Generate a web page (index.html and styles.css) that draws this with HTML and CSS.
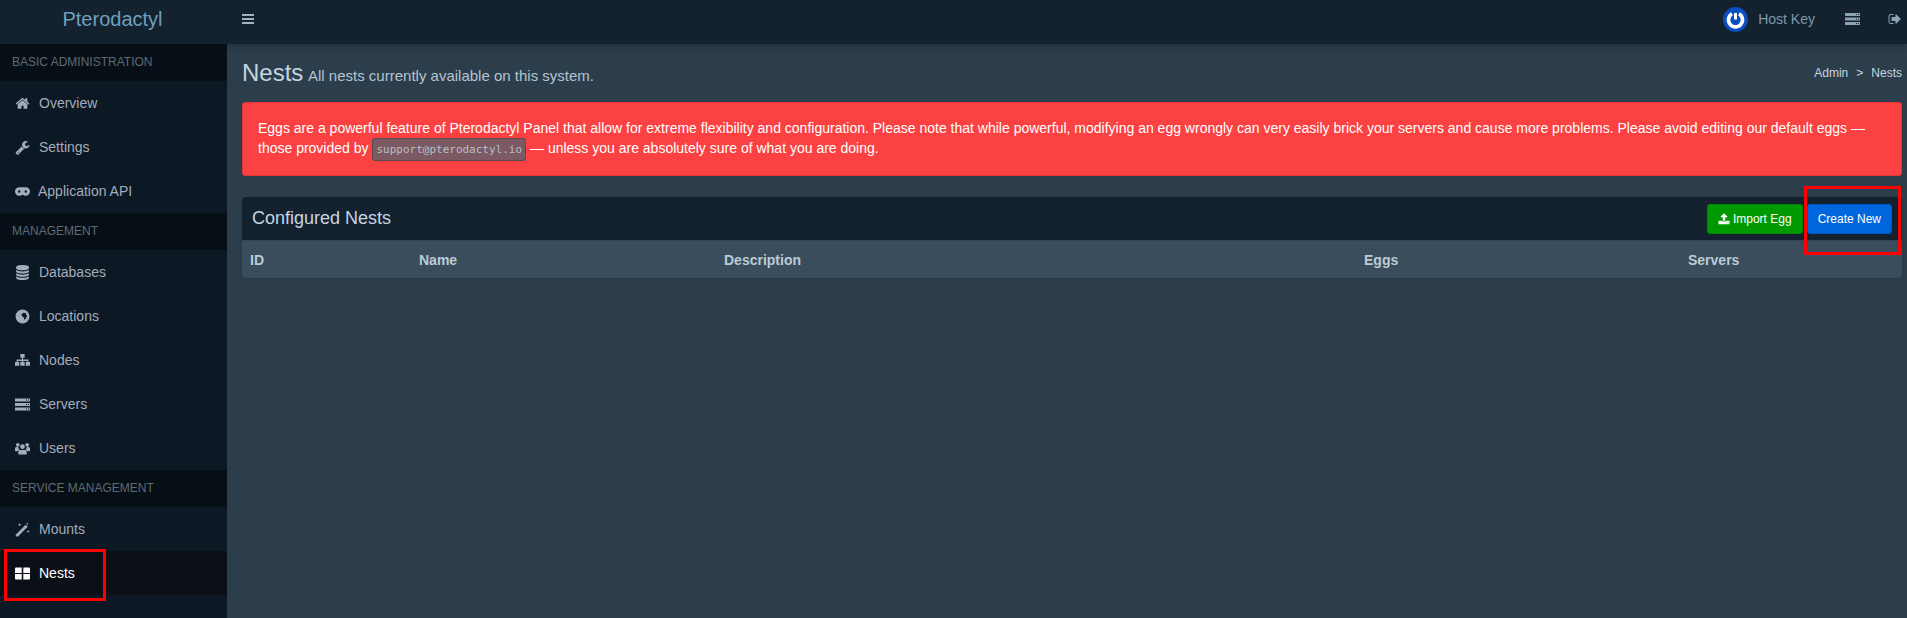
FILE: index.html
```html
<!DOCTYPE html>
<html lang="en">
<head>
    <meta charset="UTF-8">
    <meta name="viewport" content="width=device-width, initial-scale=1.0">
    <title>Nests</title>
    <link rel="stylesheet" href="styles.css">
</head>
<body>
    <header class="topbar">
        <a class="logo">Pterodactyl</a>
        <svg class="menu-toggle" viewBox="0 0 14 12"><path d="M1 1h12v2H1zM1 5h12v2H1zM1 9h12v2H1z"/></svg>
        <div class="topbar-right">
            <svg class="user-logo" viewBox="0 0 25 25">
                <circle cx="12.500" cy="12.500" r="12.500" fill="#0a4fc0"/>
                <path d="M9 6.800a7 7 0 1 0 7 0" fill="none" stroke="#fff" stroke-width="3.600"/>
                <path d="M12.500 6v6.500" stroke="#fff" stroke-width="3"/>
            </svg>
            <span class="user-name">Host Key</span>
            <svg class="top-icon server-icon" viewBox="0 0 15 12"><path fill-rule="evenodd" d="M0 0h15v3H0zM0 4.500h15v3H0zM0 9h15v3H0zM11 1v1h1V1zM13 1v1h1V1zM11 5.500v1h1v-1zM13 5.500v1h1v-1zM11 10v1h1v-1zM13 10v1h1v-1z"/></svg>
            <svg class="top-icon signout-icon" viewBox="0 0 1664 1792"><path d="M704 1440q0 4 1 20t.5 26.500-3 23.500-10 19.500-20.500 6.500h-320q-119 0-203.500-84.500t-84.500-203.500v-704q0-119 84.500-203.500t203.500-84.500h320q13 0 22.500 9.500t9.500 22.500q0 4 1 20t.5 26.500-3 23.500-10 19.500-20.500 6.500h-320q-66 0-113 47t-47 113v704q0 66 47 113t113 47h312l11.500 1 11.500 3 8 5.500 7 9 2 13.500zm928-544q0 26-19 45l-544 544q-19 19-45 19t-45-19-19-45v-288h-448q-26 0-45-19t-19-45v-384q0-26 19-45t45-19h448v-288q0-26 19-45t45-19 45 19l544 544q19 19 19 45z"/></svg>
        </div>
    </header>

    <div class="wrapper">
        <aside class="sidebar">
            <div class="side-header">BASIC ADMINISTRATION</div>
            <a class="side-item">
                <svg class="side-icon" viewBox="0 0 1792 1792"><path d="M1472 992v480q0 26-19 45t-45 19h-384v-384h-256v384h-384q-26 0-45-19t-19-45v-480q0-1 .5-3t.5-3l575-474 575 474q1 2 1 6zm223-69l-62 74q-8 9-21 11h-3q-13 0-21-7l-692-577-692 577q-12 8-24 7-13-2-21-11l-62-74q-8-10-7-23.500t11-21.500l719-599q32-26 76-26t76 26l244 204v-195q0-14 9-23t23-9h192q14 0 23 9t9 23v408l219 182q10 8 11 21.500t-7 23.500z"/></svg>
                Overview
            </a>
            <a class="side-item">
                <svg class="side-icon" viewBox="0 0 1792 1792"><path d="M448 1472q0-26-19-45t-45-19-45 19-19 45 19 45 45 19 45-19 19-45zm644-420l-682 682q-37 37-90 37-52 0-91-37l-106-108q-38-36-38-90 0-53 38-91l681-681q39 98 114.500 173.500t173.500 114.500zm634-435q0 39-23 106-47 134-164.500 217.500t-258.500 83.500q-185 0-316.500-131.500t-131.500-316.500 131.500-316.500 316.500-131.500q58 0 121.500 16.500t107.500 46.500q16 11 16 28t-16 28l-293 169v224l193 107q5-3 79-48.500t135.500-81 70.500-35.500q15 0 23.500 10t8.500 25z"/></svg>
                Settings
            </a>
            <a class="side-item tight">
                <svg class="side-icon" viewBox="0 1 16 14"><path fill-rule="evenodd" d="M4.500 3.500h7a4.500 4.500 0 0 1 0 9c-1.500 0-2.200-.8-3.500-.8s-2 .8-3.500.8a4.500 4.500 0 0 1 0-9zM4.500 6.700a1.300 1.300 0 1 0 0 2.600 1.300 1.300 0 0 0 0-2.600zM11.500 6.700a1.300 1.300 0 1 0 0 2.600 1.300 1.300 0 0 0 0-2.600z"/></svg>
                Application API
            </a>

            <div class="side-header">MANAGEMENT</div>
            <a class="side-item">
                <svg class="side-icon" viewBox="0 0 1792 1792"><path d="M896 768q237 0 443-43t325-127v170q0 69-103 128t-280 93.500-385 34.500-385-34.500-280-93.500-103-128v-170q119 84 325 127t443 43zm0 768q237 0 443-43t325-127v170q0 69-103 128t-280 93.500-385 34.500-385-34.500-280-93.500-103-128v-170q119 84 325 127t443 43zm0-384q237 0 443-43t325-127v170q0 69-103 128t-280 93.500-385 34.500-385-34.500-280-93.500-103-128v-170q119 84 325 127t443 43zm0-1152q208 0 385 34.500t280 93.500 103 128v128q0 69-103 128t-280 93.500-385 34.500-385-34.500-280-93.500-103-128v-128q0-69 103-128t280-93.500 385-34.500z"/></svg>
                Databases
            </a>
            <a class="side-item">
                <svg class="side-icon" viewBox="1 1 14 14"><path fill-rule="evenodd" d="M8 1.500a6.500 6.500 0 1 1 0 13 6.500 6.500 0 0 1 0-13zM7 6l2-1.500 2.500.5-.5 1 1.200 1-.7 2.500-1.700 1.700-.6-2.200-1.600-1.200z"/></svg>
                Locations
            </a>
            <a class="side-item">
                <svg class="side-icon" viewBox="1 1 14 14"><path d="M6 2h4v3.500H8.500V7H13.500v2.500H15V13h-4V9.500h1.500V8.500h-4v1H10V13H6V9.500h1.500v-1h-4v1H5V13H1V9.500h1.500V7h5V5.500H6z"/></svg>
                Nodes
            </a>
            <a class="side-item">
                <svg class="side-icon" viewBox="0 0 15 12"><path fill-rule="evenodd" d="M0 0h15v3H0zM0 4.500h15v3H0zM0 9h15v3H0zM11 1v1h1V1zM13 1v1h1V1zM11 5.500v1h1v-1zM13 5.500v1h1v-1zM11 10v1h1v-1zM13 10v1h1v-1z"/></svg>
                Servers
            </a>
            <a class="side-item">
                <svg class="side-icon" viewBox="0 0 16 14"><path d="M3 1a2 2 0 1 1 0 4 2 2 0 0 1 0-4zM13 1a2 2 0 1 1 0 4 2 2 0 0 1 0-4zM8 2.500a2.500 2.500 0 1 1 0 5 2.500 2.500 0 0 1 0-5zM0 6.500c0-1 2-1.500 3.500-1 0 1 .5 2 1.300 2.700C3.500 8.500 3 9.500 3 10H1c-.6 0-1-.4-1-1zM16 6.500c0-1-2-1.500-3.500-1 0 1-.5 2-1.300 2.700 1.300.3 1.800 1.300 1.800 1.800h2c.6 0 1-.4 1-1zM5 8.500h6c1 0 1.500 1 1.500 2.500v1.500c0 .6-.4 1-1 1h-7c-.6 0-1-.4-1-1V11c0-1.500.5-2.500 1.500-2.500z"/></svg>
                Users
            </a>

            <div class="side-header">SERVICE MANAGEMENT</div>
            <a class="side-item">
                <svg class="side-icon" viewBox="0 0 16 16"><path d="M1 13.300 10.800 3.500a1 1 0 0 1 1.400 0l.8.8a1 1 0 0 1 0 1.400L3.200 15.500a1 1 0 0 1-1.400 0l-.8-.8a1 1 0 0 1 0-1.400z"/><path d="M5 1l.5 1.500L7 3l-1.500.5L5 5l-.5-1.500L3 3l1.500-.5zM14 8l.5 1.500L16 10l-1.500.5L14 12l-.5-1.500L12 10l1.500-.5zM13 .5l.4 1.100 1.100.4-1.100.4-.4 1.100-.4-1.100L11.500 2l1.100-.4z"/></svg>
                Mounts
            </a>
            <a class="side-item active">
                <svg class="side-icon" viewBox="0 0 15 12"><path d="M0 1a1 1 0 0 1 1-1h5.700v5.400H0zM8.300 0H14a1 1 0 0 1 1 1v4.400H8.300zM0 6.600h6.700V12H1a1 1 0 0 1-1-1zM8.300 6.600H15V11a1 1 0 0 1-1 1H8.300z"/></svg>
                Nests
                <span class="mark mark-side"></span>
            </a>
        </aside>

        <main class="content">
            <div class="content-header">
                <h1>Nests <small>All nests currently available on this system.</small></h1>
                <ol class="breadcrumb">
                    <li>Admin</li>
                    <li class="crumb-sep">&gt;</li>
                    <li>Nests</li>
                </ol>
            </div>

            <div class="alert">
                Eggs are a powerful feature of Pterodactyl Panel that allow for extreme flexibility and configuration. Please note that while powerful, modifying an egg wrongly can very easily brick your servers and cause more problems. Please avoid editing our default eggs — those provided by <code>support@pterodactyl.io</code> — unless you are absolutely sure of what you are doing.
            </div>

            <div class="box">
                <div class="box-header">
                    <h3>Configured Nests</h3>
                    <div class="box-tools">
                        <a class="btn btn-green">
                            <svg class="btn-icon" viewBox="0 0 1792 1792"><path d="M1344 1472q0-26-19-45t-45-19-45 19-19 45 19 45 45 19 45-19 19-45zm256 0q0-26-19-45t-45-19-45 19-19 45 19 45 45 19 45-19 19-45zm128-224v320q0 40-28 68t-68 28h-1472q-40 0-68-28t-28-68v-320q0-40 28-68t68-28h427q21 56 70.500 92t110.500 36h256q61 0 110.500-36t70.500-92h427q40 0 68 28t28 68zm-325-648q-17 40-59 40h-256v448q0 26-19 45t-45 19h-256q-26 0-45-19t-19-45v-448h-256q-42 0-59-40-17-39 14-69l448-448q18-19 45-19t45 19l448 448q31 30 14 69z"/></svg>
                            Import Egg
                        </a>
                        <a class="btn btn-blue">Create New<span class="mark mark-btn"></span></a>
                    </div>
                </div>
                <table class="nest-table">
                    <thead>
                        <tr>
                            <th class="col-id">ID</th>
                            <th class="col-name">Name</th>
                            <th class="col-desc">Description</th>
                            <th class="col-eggs">Eggs</th>
                            <th>Servers</th>
                        </tr>
                    </thead>
                </table>
            </div>
        </main>
    </div>
</body>
</html>
```

FILE: styles.css
```css
* {
    box-sizing: border-box;
}
body {
    display: flex;
    flex-direction: column;
    height: 100vh;
    margin: 0;
    overflow: hidden;
    background-color: #2c3e4c;
    font-family: "Liberation Sans", Arial, sans-serif;
    font-size: 14px;
    color: #cad1d8;
}

/* top bar */
.topbar {
    display: flex;
    align-items: center;
    height: 44px;
    padding-bottom: 6px;
    flex-shrink: 0;
    background-color: #14222f;
    box-shadow: 0 2px 6px rgba(10, 20, 30, 0.35);
    position: relative;
}
.logo {
    width: 225px;
    text-align: center;
    font-size: 20px;
    color: #6f9fbd;
}
.menu-toggle {
    width: 14px;
    height: 12px;
    margin-left: 16px;
    fill: #9fb4c2;
}
.topbar-right {
    display: flex;
    align-items: center;
    margin-left: auto;
}
.user-logo {
    width: 25px;
    height: 25px;
}
.user-name {
    margin-left: 10px;
    color: #7d97a9;
}
.top-icon {
    fill: #8ba3b4;
}
.server-icon {
    width: 15px;
    height: 12px;
    margin-left: 30px;
}
.signout-icon {
    width: 13px;
    height: 14px;
    margin-left: 28px;
    margin-right: 6px;
}

.wrapper {
    display: flex;
    flex: 1;
    min-height: 0;
}

/* sidebar */
.sidebar {
    width: 227px;
    flex-shrink: 0;
    background-color: #0c1823;
}
.side-header {
    height: 37px;
    line-height: 37px;
    padding-left: 12px;
    font-size: 12px;
    color: #5f6a72;
    background-color: #070f16;
}
.side-item {
    display: flex;
    align-items: center;
    position: relative;
    height: 44px;
    padding-left: 15px;
    color: #a3acbd;
}
.side-icon {
    width: 15px;
    height: 15px;
    margin-right: 9px;
    fill: #a3acbd;
    flex-shrink: 0;
}
.side-item.tight .side-icon {
    margin-right: 8px;
}
.side-item.active {
    background-color: #0d0f17;
    color: #fff;
}
.side-item.active .side-icon {
    fill: #fff;
}

/* red annotation rectangles */
.mark {
    position: absolute;
    border: 3px solid #f00;
    pointer-events: none;
}
.mark-side {
    left: 4px;
    top: -2px;
    width: 102px;
    height: 52px;
}
.mark-btn {
    left: -4px;
    top: -19px;
    width: 97px;
    height: 69px;
}

/* content */
.content {
    flex: 1;
    min-width: 0;
    padding: 15px 5px 0 15px;
}
.content-header {
    display: flex;
    align-items: center;
    justify-content: space-between;
    height: 28px;
    margin-bottom: 15px;
}
.content-header h1 {
    margin: 0;
    font-size: 24px;
    font-weight: 400;
    color: #c6d5e0;
}
.content-header small {
    margin-left: -2px;
    font-size: 15px;
    color: #b5c4cf;
}
.breadcrumb {
    display: flex;
    gap: 8px;
    margin: 0;
    padding: 0;
    list-style: none;
    font-size: 12px;
    color: #c6d5e0;
}
.alert {
    min-height: 73px;
    padding: 15px;
    border: 1px solid #e83535;
    border-radius: 3px;
    background-color: #fb4141;
    color: #fff;
    line-height: 20px;
    margin-bottom: 21px;
}
code {
    padding: 4px 3px;
    border: 1px solid #5a4a50;
    border-radius: 3px;
    background-color: #7b5a63;
    color: #b9bfc6;
    font-family: "DejaVu Sans Mono", monospace;
    font-size: 11px;
}

/* box */
.box {
    border-radius: 3px;
    background-color: #394d5c;
    box-shadow: 0 1px 2px rgba(0, 0, 0, 0.2);
}
.box-header {
    display: flex;
    align-items: center;
    justify-content: space-between;
    height: 44px;
    padding: 0 10px;
    background-color: #14222f;
    border-bottom: 1px solid #33454f;
    border-radius: 3px 3px 0 0;
}
.box-header h3 {
    margin: 0;
    font-size: 18px;
    font-weight: 400;
    color: #c6d5e0;
}
.box-tools {
    display: flex;
    gap: 4px;
}
.btn {
    display: flex;
    align-items: center;
    position: relative;
    height: 30px;
    padding: 0 10px;
    border-radius: 3px;
    font-size: 12px;
    color: #fff;
}
.btn-green {
    background-color: #009900;
    border: 1px solid #008800;
}
.btn-blue {
    background-color: #0066dd;
    border: 1px solid #0059c2;
}
.btn-icon {
    width: 12px;
    height: 12px;
    margin-right: 3px;
    fill: #fff;
}
.nest-table {
    width: 100%;
    border-collapse: collapse;
    table-layout: fixed;
}
.nest-table th {
    height: 37px;
    padding: 0 8px;
    text-align: left;
    font-size: 14px;
    color: #bccbd6;
}
.col-id { width: 169px; }
.col-name { width: 305px; }
.col-desc { width: 640px; }
.col-eggs { width: 324px; }
```
